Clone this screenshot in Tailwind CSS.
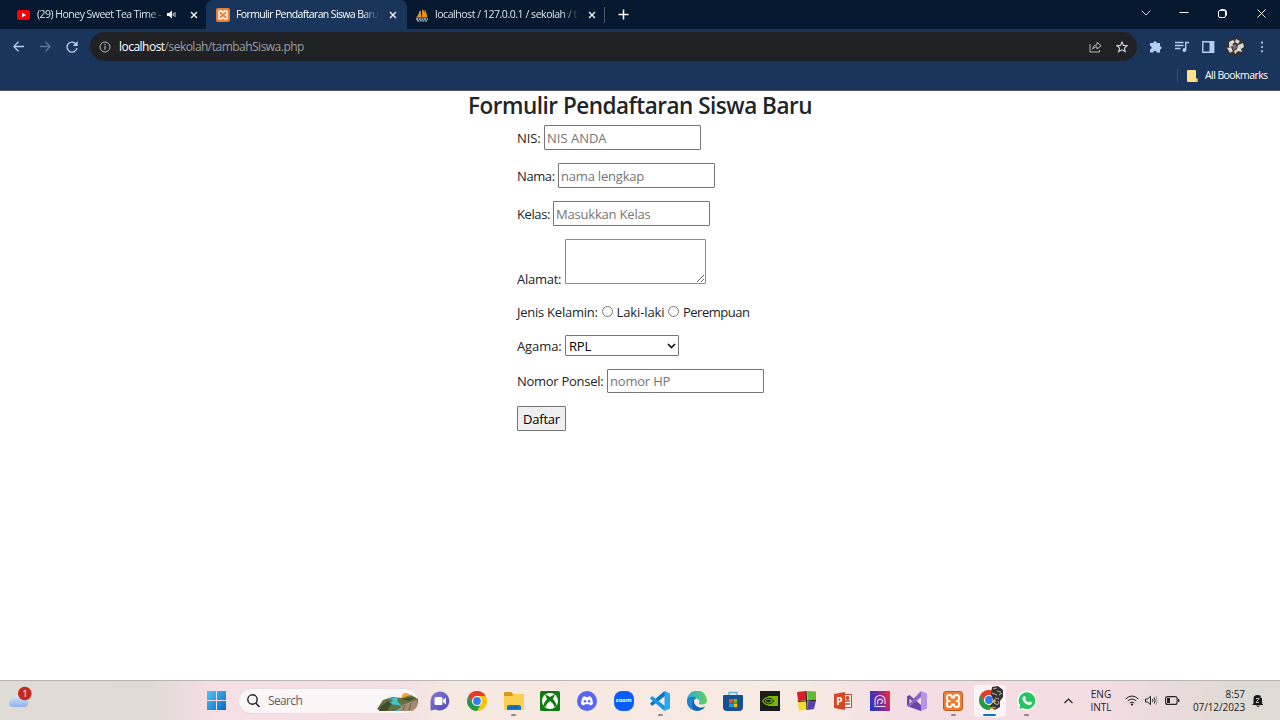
<!DOCTYPE html>
<html lang="id">
<head>
<meta charset="utf-8">
<title>Formulir Pendaftaran Siswa Baru</title>
<script src="https://cdn.jsdelivr.net/npm/@tailwindcss/browser@4"></script>
</head>
<body class="h-[720px] w-[1280px] overflow-hidden bg-white font-['Open_Sans','Noto_Sans',sans-serif]">
<div class="flex h-[720px] w-[1280px] flex-col overflow-hidden">

<!-- Tab strip -->
<header class="flex h-[29px] shrink-0 bg-[#071831] text-[10.5px] text-white">
  <div class="flex w-[206px] items-center pl-[17px]">
    <svg class="h-[10px] w-[13px] shrink-0" viewBox="0 0 13 10"><rect width="13" height="10" rx="2.5" fill="#f00"/><path d="M5 2.8 9 5 5 7.2z" fill="#fff"/></svg>
    <span class="ml-[7px] w-[130px] whitespace-nowrap text-[10.5px] tracking-[-0.52px] text-[#dce3ee] [mask-image:linear-gradient(90deg,#000_85%,transparent)]">(29) Honey Sweet Tea Time -</span>
    <svg class="h-[9px] w-[10px] shrink-0" viewBox="0 0 10 9"><path d="M0 3h2l3-2.5v8L2 6H0z" fill="#fff"/><path d="M6.3 3v3M8 2v5" stroke="#cdd6e4" fill="none"/></svg>
    <svg class="ml-[13px] h-[8px] w-[8px] shrink-0" viewBox="0 0 8 8"><path d="m1 1 6 6M7 1 1 7" stroke="#fff" stroke-width="1.3"/></svg>
  </div>
  <div class="flex w-[201px] items-center rounded-t-[7px] bg-[#1a355b] pl-[10px]">
    <svg class="h-[14px] w-[14px] shrink-0" viewBox="0 0 20 20"><rect width="20" height="20" rx="3" fill="#ef7c35"/><path d="M4 6q0-2 2.500-2Q9 4 9 6.500h2Q11 4 13.500 4 16 4 16 6v2q0 1.500-1.500 2 1.500.5 1.500 2v2q0 2-2.500 2-2.500 0-2.500-2.500H9Q9 16 6.500 16 4 16 4 14v-2q0-1.500 1.500-2Q4 9.500 4 8z" fill="none" stroke="#fff" stroke-width="2.100"/></svg>
    <span class="ml-[6px] w-[143px] whitespace-nowrap tracking-[-0.62px] [mask-image:linear-gradient(90deg,#000_88%,transparent)]">Formulir Pendaftaran Siswa Baru</span>
    <svg class="ml-[10px] h-[8px] w-[8px] shrink-0" viewBox="0 0 8 8"><path d="m1 1 6 6M7 1 1 7" stroke="#fff" stroke-width="1.3"/></svg>
  </div>
  <div class="flex w-[197px] items-center pl-[8px]">
    <svg class="h-[14px] w-[14px] shrink-0" viewBox="0 0 14 14"><path d="M1 9.5Q4 7 4.5 2L6 9.5zM6.500 9.500Q7.500 5 7 1q4 3 5 8.500z" fill="#f29111"/><path d="M5.500 9.500V3M12 9l-2-7" stroke="#ffc46a" stroke-width=".7"/><path d="M1 11h12M2 12.800h10" stroke="#c0bfd0" stroke-width="1.300" stroke-dasharray="2 .7"/></svg>
    <span class="ml-[6px] w-[144px] whitespace-nowrap tracking-[-0.45px] text-[#dce3ee] [mask-image:linear-gradient(90deg,#000_88%,transparent)]">localhost / 127.0.0.1 / sekolah / t</span>
    <svg class="ml-[9px] h-[8px] w-[8px] shrink-0" viewBox="0 0 8 8"><path d="m1 1 6 6M7 1 1 7" stroke="#fff" stroke-width="1.3"/></svg>
  </div>
  <div class="flex items-center">
    <span class="h-[16px] w-px bg-[#4b5769]"></span>
    <svg class="ml-[13px] h-[11px] w-[11px]" viewBox="0 0 11 11"><path d="M5.500.5v10M.5 5.500h10" stroke="#fff" stroke-width="1.500"/></svg>
  </div>
  <div class="ml-auto flex h-[26px] items-center pr-[14px]">
    <svg class="h-[6px] w-[10px]" viewBox="0 0 10 6"><path d="m.7.7 4.300 4.300L9.300.7" fill="none" stroke="#d5dbe5"/></svg>
    <svg class="ml-[28px] h-[10px] w-[10px]" viewBox="0 0 10 10"><path d="M.5 4.500h9" stroke="#fff"/></svg>
    <svg class="ml-[29px] h-[9px] w-[9px]" viewBox="0 0 9 9"><rect x=".5" y="1.500" width="7" height="7" rx="1.500" fill="none" stroke="#fff"/><path d="M2.500.6h3.500q2.500 0 2.500 2.500v3.500" fill="none" stroke="#fff"/></svg>
    <svg class="ml-[30px] h-[9px] w-[9px]" viewBox="0 0 9 9"><path d="m.5.5 8 8M8.500.5l-8 8" stroke="#fff"/></svg>
  </div>
</header>

<!-- Toolbar -->
<div class="flex h-[35px] shrink-0 items-center bg-[#1a355b] pl-[13px]">
  <svg class="h-[11px] w-[11px]" viewBox="0 0 11 11"><path d="M11 5.500H1M5.500.7.8 5.500l4.700 4.800" fill="none" stroke="#b5cdf0" stroke-width="1.300"/></svg>
  <svg class="ml-[16px] h-[11px] w-[11px]" viewBox="0 0 11 11"><path d="M0 5.500h10M5.500.7l4.700 4.800-4.700 4.800" fill="none" stroke="#5674a0" stroke-width="1.300"/></svg>
  <svg class="ml-[15px] h-[12px] w-[12px]" viewBox="0 0 12 12"><path d="M10.500 3.800A5 5 0 1 0 11 7" fill="none" stroke="#b5cdf0" stroke-width="1.400"/><path d="M11.700 0v5H6.700z" fill="#b5cdf0"/></svg>
  <div class="ml-[12px] flex h-[29px] w-[1047px] items-center rounded-full bg-[#202124] pr-[9px] pl-[9px]">
    <svg class="h-[12px] w-[12px]" viewBox="0 0 12 12"><circle cx="6" cy="6" r="5" fill="none" stroke="#b4b7bb"/><path d="M6 5.200v3.600M6 3v1.200" stroke="#b4b7bb" stroke-width="1.200"/></svg>
    <span class="ml-[8px] text-[12px] tracking-[-0.52px] text-[#9a9da1]"><span class="text-white">localhost</span>/sekolah/tambahSiswa.php</span>
    <svg class="ml-auto h-[12px] w-[13px]" viewBox="0 0 13 12"><path d="M1 3v8h9.500V9M3.500 8Q4 4 8 3.700V1.300l4.200 3.500L8 8V5.900Q5.200 5.800 3.500 8z" fill="none" stroke="#b4b7bb"/></svg>
    <svg class="ml-[14px] h-[12px] w-[12px]" viewBox="0 0 12 12"><path d="m6 1 1.500 3.400 3.700.3-2.800 2.400.9 3.600L6 8.800l-3.300 1.900.9-3.600L.8 4.700l3.700-.3z" fill="none" stroke="#d5d7da" stroke-width="1.100"/></svg>
  </div>
  <svg class="ml-[12px] h-[13px] w-[13px]" viewBox="0 0 13 13"><path d="M1 3h3.200a1.800 1.800 0 1 1 3.600 0H11v3.200a1.600 1.600 0 1 1 0 3.200V12.500H7.700a1.700 1.700 0 0 0-3.400 0H1V9.300a1.600 1.600 0 0 0 0-3.300z" fill="#b5cdf0"/></svg>
  <svg class="ml-[13px] h-[12px] w-[14px]" viewBox="0 0 14 12"><path d="M0 1.500h8.500M0 4.500h8.500M0 7.500h5.500M10.700 9V1.500H14" fill="none" stroke="#b5cdf0" stroke-width="1.400"/><circle cx="9.400" cy="9" r="1.900" fill="#b5cdf0"/></svg>
  <svg class="ml-[13px] h-[12px] w-[13px]" viewBox="0 0 13 12"><path d="M.8.8h10.900v10.400H.8z" fill="none" stroke="#b5cdf0" stroke-width="1.400"/><path d="M7.500 1h4v10h-4z" fill="#b5cdf0"/></svg>
  <svg class="ml-[11px] h-[19px] w-[19px]" viewBox="0 0 19 19"><circle cx="9.500" cy="9.500" r="9.500" fill="#312f30"/><path d="m3 5 4-2 2 2-3 2 2 2-5 1zM10 2l4 2-2 3-3-2zM1 11l4-1 2 4-3 2zM12 8l5-2 1 4-3 2 1 3-4-1-3 3-1-3 3-2z" fill="#d8d5cf"/><path d="m7 8 3-1 1 4-4 2z" fill="#77706a"/><path d="m5 4 2 3M12 12l3 2M3 12l3 1" stroke="#eee"/></svg>
  <svg class="ml-[15px] h-[12px] w-[4px]" viewBox="0 0 4 12"><g fill="#b5cdf0"><circle cx="2" cy="1.700" r="1.100"/><circle cx="2" cy="6" r="1.100"/><circle cx="2" cy="10.300" r="1.100"/></g></svg>
</div>

<!-- Bookmarks bar -->
<div class="flex h-[27px] shrink-0 items-center justify-end border-b border-[#4a5470] bg-[#1a355b] pr-[12px] pb-[3px]">
  <span class="h-[13px] w-px bg-[#35527b]"></span>
  <svg class="ml-[9px] h-[12px] w-[11px]" viewBox="0 0 11 12"><path d="M0 1q0-1 1-1h7q1 0 1 1v7l1.500 1v3H1q-1 0-1-1z" fill="#ffe08a"/><path d="M8.500 8.500h2V12h-2z" fill="#f5c84c"/></svg>
  <span class="ml-[7px] w-[63px] text-[10.5px] tracking-[-0.57px] whitespace-nowrap text-white">All Bookmarks</span>
</div>

<!-- Page -->
<main class="flex h-[589px] shrink-0 flex-col bg-white text-[13px] leading-[20px] tracking-[-0.2px] text-[#212529]">
  <h1 class="h-[34px] text-center text-[22.5px] leading-[29px] font-semibold tracking-[-0.49px] whitespace-nowrap">Formulir Pendaftaran Siswa Baru</h1>
  <form class="ml-[517px] flex flex-col items-start gap-[13px]">
    <div class="flex h-[25px] items-center"><label class="w-[27px] tracking-[-0.1px] whitespace-nowrap">NIS:</label><input class="h-[25px] w-[157px] rounded-[1px] border border-[#767676] px-[2px] tracking-[0px] placeholder:text-[#757575]" placeholder="NIS ANDA"></div>
    <div class="flex h-[25px] items-center"><label class="w-[41px] tracking-[-0.4px] whitespace-nowrap">Nama:</label><input class="h-[25px] w-[157px] rounded-[1px] border border-[#767676] px-[2px] placeholder:text-[#757575]" placeholder="nama lengkap"></div>
    <div class="flex h-[25px] items-center"><label class="w-[36px] tracking-[-0.4px] whitespace-nowrap">Kelas:</label><input class="h-[25px] w-[157px] rounded-[1px] border border-[#767676] px-[2px] placeholder:text-[#757575]" placeholder="Masukkan Kelas"></div>
    <div class="flex h-[45px] items-end"><label class="-mb-[5px] w-[48px] tracking-[-0.25px] whitespace-nowrap">Alamat:</label><textarea class="h-[45px] w-[141px] resize rounded-[1px] border border-[#8a8a8a]"></textarea></div>
    <div class="mt-[5px] flex h-[20px] items-center whitespace-nowrap">
      <span class="w-[85px] tracking-[-0.25px]">Jenis Kelamin:</span>
      <input type="radio" class="-mt-[2px] h-[11px] w-[11px] appearance-none rounded-full border border-[#767676]"><label class="w-[55px] pl-[3.500px] tracking-[-0.1px]">Laki-laki</label>
      <input type="radio" class="-mt-[2px] h-[11px] w-[11px] appearance-none rounded-full border border-[#767676]"><label class="pl-[4px] tracking-[-0.5px]">Perempuan</label>
    </div>
    <div class="flex h-[21px] items-center"><label class="w-[48px] tracking-[-0.1px] whitespace-nowrap">Agama:</label>
      <div class="grid h-[21px] w-[114px] items-center">
        <select class="col-start-1 row-start-1 h-[21px] w-[114px] appearance-none rounded-[1px] border border-[#767676] pl-[3px] leading-[20px] text-black"><option>RPL</option></select>
        <svg class="col-start-1 row-start-1 mr-[3px] h-[6px] w-[9px] justify-self-end" viewBox="0 0 9 6"><path d="m1 1 3.500 3.500L8 1" fill="none" stroke="#111" stroke-width="1.700"/></svg>
      </div></div>
    <div class="flex h-[24px] items-center"><label class="w-[90px] tracking-[-0.28px] whitespace-nowrap">Nomor Ponsel:</label><input class="h-[24px] w-[157px] rounded-[1px] border border-[#767676] px-[2px] placeholder:text-[#757575]" placeholder="nomor HP"></div>
    <button type="button" class="h-[25px] w-[49px] rounded-[1px] border border-[#767676] bg-[#efefef] text-black">Daftar</button>
  </form>
</main>

<!-- Taskbar -->
<footer class="flex h-[40px] shrink-0 items-center border-t border-[#b9b5b4] bg-[linear-gradient(90deg,#dfdbd5_0px,#dfdad5_150px,#f7dfe5_215px,#f4e0e4_400px,#f5e9e0_450px,#f8e8e2_600px,#f6ebe3_800px,#f5dde3_900px,#f4dce3_1100px,#e0dad4_1230px,#dfdad4_1280px)] text-[#222]">
  <svg class="ml-[8px] h-[25px] w-[26px] shrink-0 -translate-y-[3px]" viewBox="0 0 26 25"><defs><linearGradient id="cl" x2="0" y2="1"><stop stop-color="#d8e8ff"/><stop offset="1" stop-color="#8fb2ec"/></linearGradient></defs><path d="M5 22a4 4 0 0 1 0-8 6 6 0 0 1 11-1 4.600 4.600 0 0 1 1 9z" fill="url(#cl)"/><circle cx="16.800" cy="8.500" r="6.800" fill="#c42b1c"/><text x="14.500" y="12" fill="#fff" font-size="9">1</text></svg>
  <svg class="ml-[173px] h-[19px] w-[19px] shrink-0" viewBox="0 0 19 19"><defs><linearGradient id="wn" x2="1" y2="1"><stop stop-color="#4cc9f5"/><stop offset="1" stop-color="#0668cc"/></linearGradient></defs><path d="M0 0h9v9H0zM10 0h9v9h-9zM0 10h9v9H0zM10 10h9v9h-9z" fill="url(#wn)"/></svg>
  <div class="ml-[12px] flex h-[26px] w-[181px] shrink-0 items-center overflow-hidden rounded-full border border-[#e7dcde] bg-[#fbf5f7] pl-[8px]">
    <svg class="h-[14px] w-[13px]" viewBox="0 0 13 14"><circle cx="5.500" cy="5.500" r="4.700" fill="none" stroke="#222" stroke-width="1.400"/><path d="m9 9.300 3.400 3.700" stroke="#222" stroke-width="1.600"/></svg>
    <span class="ml-[8px] text-[12px] tracking-[-0.7px] text-[#5f5c5e]"><span class="tracking-[-0.65px]">Search</span></span>
    <svg class="mt-[3px] ml-auto h-[20px] w-[41px]" viewBox="0 0 41 20"><circle cx="29" cy="5.500" r="4.500" fill="#f6a531"/><path d="M0 17 6 8l9-3 10 1 9-3 7 4v8l-6 4H3z" fill="#65723f"/><path d="m20 19 7-7 13-4v7l-5 4z" fill="#a58b70"/><path d="M11 6q8 2 3 4t6 3-2 6h4q5-4 1-7t-2-6z" fill="#3fc4d0"/><path d="m3 15 8-6 4 3-5 7H2zM24 7l8 2 7-4" fill="#3f4f2c"/><path d="m26 18 2-5M32 18l2-7" stroke="#705a48"/></svg>
  </div>

  <div class="ml-[3px] flex h-[39px] shrink-0 items-center">
    <div class="flex h-full w-[36.65px] items-center justify-center"><svg class="h-[20px] w-[20px]" viewBox="0 0 20 20"><defs><linearGradient id="ch" x2="1" y2="1"><stop stop-color="#8a78d8"/><stop offset="1" stop-color="#4a49b8"/></linearGradient></defs><path d="M10 .5a9.500 9.500 0 1 1-4.500 18L.5 19.500V10A9.500 9.500 0 0 1 10 .5z" fill="url(#ch)"/><rect x="4.500" y="6" width="8" height="8" rx="1.500" fill="#fff"/><path d="m13 9 3-2.500v7L13 11z" fill="#fff"/></svg></div>
    <div class="flex h-full w-[36.65px] items-center justify-center"><svg class="h-[20px] w-[20px]" viewBox="0 0 20 20"><circle cx="10" cy="10" r="10" fill="#fbc116"/><path d="M1.340 5A10 10 0 0 1 18.660 5H10L5.670 12.500z" fill="#e33b2e"/><path d="M1.340 5 5.670 12.500 10 15h4.300L10 20A10 10 0 0 1 1.340 5z" fill="#229a49"/><path d="M14.330 12.500 10 20A10 10 0 0 0 18.660 5H10z" fill="#fbc116"/><circle cx="10" cy="10" r="5" fill="#fff"/><circle cx="10" cy="10" r="3.900" fill="#2f7de9"/></svg></div>
    <div class="relative flex h-full w-[36.65px] items-center justify-center"><svg class="h-[20px] w-[20px]" viewBox="0 0 20 20"><path d="M0 2q0-1 1-1h6l2 2h10q1 0 1 1v5H0z" fill="#d9971b"/><path d="M0 5h8l2-2h9q1 0 1 1v14q0 1-1 1H1q-1 0-1-1z" fill="#fbd050"/><path d="M3 19v-3q0-2 2-2h10q2 0 2 2v3z" fill="#1778c2"/><path d="M6 16.500h8" stroke="#0b4f8c"/></svg><span class="absolute bottom-[4px] h-[2px] w-[5px] rounded-full bg-[#8b8584]"></span></div>
    <div class="flex h-full w-[36.65px] items-center justify-center"><svg class="h-[20px] w-[20px]" viewBox="0 0 20 20"><rect width="20" height="20" rx="1.500" fill="#107c10"/><circle cx="10" cy="10" r="8" fill="#fff"/><path d="M5 3.500Q7 3.500 10 6q3-2.500 5-2.500L13 8q3.500 4 3.500 7L14.500 16Q13 12 10 10q-3 2-4.500 6L3.500 15Q3.500 12 7 8z" fill="#107c10"/></svg></div>
    <div class="flex h-full w-[36.65px] items-center justify-center"><svg class="h-[20px] w-[20px]" viewBox="0 0 20 20"><circle cx="10" cy="10" r="10" fill="#5865f2"/><path d="M6 5.800 8.300 5.200 8.800 6h2.400l.5-.8L14 5.800q2.200 3.500 2 7.200-1.500 1.200-3 1.500l-.8-1.200H7.800L7 14.500Q5.500 14.200 4 13q-.2-3.700 2-7.200z" fill="#fff"/><circle cx="7.900" cy="10.200" r="1.300" fill="#5865f2"/><circle cx="12.100" cy="10.200" r="1.300" fill="#5865f2"/></svg></div>
    <div class="flex h-full w-[36.65px] items-center justify-center"><div class="flex h-[20px] w-[20px] items-center justify-center rounded-[8px] bg-[#0b5cff] text-[6px] font-bold tracking-[-0.1px] text-white">zoom</div></div>
    <div class="relative flex h-full w-[36.65px] items-center justify-center"><svg class="h-[20px] w-[20px]" viewBox="0 0 20 20"><path d="M14.500 0 20 2.500v15L14.500 20z" fill="#29a8ee"/><path d="M14.500 0 0 12.500 2 15 15 5z" fill="#0878be"/><path d="M14.500 20 0 7.500 2 5l13 10z" fill="#1595dc"/></svg><span class="absolute bottom-[4px] h-[2px] w-[5px] rounded-full bg-[#8b8584]"></span></div>
    <div class="flex h-full w-[36.65px] items-center justify-center"><svg class="h-[20px] w-[20px]" viewBox="0 0 20 20"><defs><linearGradient id="ed" x2="1"><stop stop-color="#27a9e1"/><stop offset="1" stop-color="#61d35b"/></linearGradient></defs><path d="M0 10a10 10 0 0 1 20-1c.3 4-3.500 5-7 4.500-2-.3-.4-1.500-.5-3C12 7 4 5 0 10z" fill="url(#ed)"/><path d="M0 10c1-4.500 7-5 9.500-2.500C6 8 6 13 10 15.500c3 2 6 1 8.500-.3A10 10 0 0 1 0 10z" fill="#1263b5"/><path d="M0 10q3-4.500 8-2.500Q3 11 6.500 19A10 10 0 0 1 0 10z" fill="#1c87d4"/></svg></div>
    <div class="flex h-full w-[36.65px] items-center justify-center"><svg class="h-[20px] w-[20px]" viewBox="0 0 20 20"><path d="M6 5V1.500h8V5" fill="none" stroke="#4db8ef" stroke-width="1.400"/><path d="M0 5q0-1 1-1h18q1 0 1 1v11q0 4-4 4H4q-4 0-4-4z" fill="#174f91"/><path d="M6 8h3.700v3.700H6z" fill="#f25022"/><path d="M10.500 8h3.700v3.700h-3.700z" fill="#7fba00"/><path d="M6 12.500h3.700v3.700H6z" fill="#00a4ef"/><path d="M10.500 12.500h3.700v3.700h-3.700z" fill="#ffb900"/></svg></div>
    <div class="flex h-full w-[36.65px] items-center justify-center"><svg class="h-[20px] w-[20px]" viewBox="0 0 20 20"><path d="M0 0h20v20H0z" fill="#1b1b1b"/><path d="M8 5h10v10H8z" fill="#76b900"/><path d="M2.500 10Q7 4 12 7.500q2 1.300 3 2.500-3 4-7 3.800Q4.500 13.500 2.500 10z" fill="none" stroke="#76b900" stroke-width="1.100"/><path d="M5 10q3-3.500 7 0-3 3.500-7 0z" fill="#1b1b1b" stroke="#76b900"/><path d="M8 7q3.500 0 6 3-2.500 3-6 3" fill="none" stroke="#1b1b1b"/></svg></div>
    <div class="flex h-full w-[36.65px] items-center justify-center"><svg class="h-[20px] w-[20px]" viewBox="0 0 20 20"><path d="m0 1 9-1 1 9-9 1z" fill="#d91f26"/><path d="m10 0 9 .5V9l-8.500.5z" fill="#62bb30"/><path d="m1 11 8-1 1 8-8 2z" fill="#f0de2a"/><path d="m10.500 10.500 8.500-1-2 8.500-6.500 1z" fill="#5941a8"/><path d="m9 0 1 19M1 10.500 19 9.300" stroke="#222"/></svg></div>
    <div class="flex h-full w-[36.65px] items-center justify-center"><svg class="h-[20px] w-[20px]" viewBox="0 0 20 20"><path d="M10 3.500h8.500v13H10z" fill="#fff" stroke="#cf4323"/><path d="M12 10h5M12 13h5" stroke="#cf4323" stroke-width="1.400"/><circle cx="14.500" cy="7" r="2" fill="#cf4323"/><path d="m1 3 11-2v18L1 17z" fill="#d24726"/><text x="3.300" y="13.700" font-size="10" font-weight="bold" fill="#fff">P</text></svg></div>
    <div class="flex h-full w-[36.65px] items-center justify-center"><svg class="h-[20px] w-[20px]" viewBox="0 0 20 20"><defs><linearGradient id="rd" x1="0" y1=".6" x2="1" y2=".3"><stop stop-color="#2838c0"/><stop offset=".5" stop-color="#772a9c"/><stop offset="1" stop-color="#f02844"/></linearGradient></defs><path d="M0 0h20v20H0z" fill="url(#rd)"/><path d="M5 14.500V9.500a5 5 0 0 1 10 0v3.500M7.600 13.500V10a2.600 2.600 0 0 1 5 0q0 2.300-2.300 2.500M4.500 15.500h11" fill="none" stroke="#ece3fa" stroke-width="1.100"/></svg></div>
    <div class="flex h-full w-[36.65px] items-center justify-center"><svg class="h-[20px] w-[20px]" viewBox="0 0 20 20"><path d="M0 5.500 2.500 4 14 14v6L2.500 16 0 14.500z" fill="#6a45a5"/><path d="M14 0v6L2.500 16 0 14.500z" fill="#8c64c5"/><path d="M14 0 20 2.500v15L14 20z" fill="#b692e8"/><path d="M2.500 7.500v5L5 10z" fill="#f5dde3"/></svg></div>
    <div class="relative flex h-full w-[36.65px] items-center justify-center"><svg class="h-[20px] w-[20px]" viewBox="0 0 20 20"><rect x=".5" y=".5" width="19" height="19" rx="2.500" fill="#ef7d32" stroke="#bd5a19"/><path d="M4 6q0-2 2.500-2Q9 4 9 6.500h2Q11 4 13.500 4 16 4 16 6v2q0 1.500-1.500 2 1.500.5 1.500 2v2q0 2-2.500 2-2.500 0-2.500-2.500H9Q9 16 6.500 16 4 16 4 14v-2q0-1.500 1.500-2Q4 9.500 4 8z" fill="none" stroke="#fff" stroke-width="1.900"/></svg><span class="absolute bottom-[4px] h-[2px] w-[5px] rounded-full bg-[#8b8584]"></span></div>
    <div class="relative flex h-full w-[36.65px] items-center justify-center"><div class="flex h-[32px] w-[32px] items-center justify-center rounded-[3px] bg-[#fcf3f6]"><svg class="mt-[-3px] ml-[2px] h-[26px] w-[26px] shrink-0" viewBox="0 0 26 26"><g transform="translate(1 4)"><circle cx="10" cy="10" r="10" fill="#fbc116"/><path d="M1.340 5A10 10 0 0 1 18.660 5H10L5.670 12.500z" fill="#e33b2e"/><path d="M1.340 5 5.670 12.500 10 15h4.300L10 20A10 10 0 0 1 1.340 5z" fill="#229a49"/><circle cx="10" cy="10" r="5" fill="#fff"/><circle cx="10" cy="10" r="3.900" fill="#2f7de9"/></g><path d="m14 1 6-1 5 4v7l-3 4v6l-5 3-5-4 4-5-3-6z" fill="#343232"/><path d="m15 3 4-1M19 5l4 1M14 7l5 2M21 9l3-2M17 12l4 1M16 17l4 2M14 21l4 1M20 15l1 3" stroke="#aaa7a3" stroke-width="1.100"/><path d="m14 15 3-2 1 3-3 1z" fill="#efb528"/></svg></div><span class="absolute bottom-[4px] h-[2px] w-[13px] rounded-full bg-[#0870d2]"></span></div>
    <div class="relative flex h-full w-[36.65px] items-center justify-center"><svg class="h-[20px] w-[20px]" viewBox="0 0 20 20"><path d="M10 0a9.700 9.700 0 1 1-4.700 18.300L.3 19.700 1.700 15A9.700 9.700 0 0 1 10 0z" fill="#fff"/><path d="M10 1.300a8.400 8.400 0 1 1-4.400 15.600l-3.400 1 1-3.400A8.400 8.400 0 0 1 10 1.300z" fill="#25c562"/><path d="M6.800 5.200q1.200-.5 1.500.6l.5 1.300q.2.500-.6 1.400 1.300 2.200 3.400 3 .8-1.300 1.500-1l1.700.9q.5.300 0 1.400-1 1.600-3 1.200-5-1.400-6.400-5.800-.3-2 1.400-3z" fill="#fff"/></svg><span class="absolute bottom-[4px] h-[2px] w-[5px] rounded-full bg-[#8b8584]"></span></div>
  </div>

  <div class="ml-auto flex items-center pr-[16px] text-[10px] leading-[13px]">
    <svg class="h-[6px] w-[9px]" viewBox="0 0 9 6"><path d="m.5 5 4-4 4 4" fill="none" stroke="#222" stroke-width="1.200"/></svg>
    <div class="ml-[17px] w-[22px] text-center whitespace-nowrap">ENG<br>INTL</div>
    <svg class="ml-[13px] h-[11px] w-[14px]" viewBox="0 0 14 11"><path d="M.7 4Q7-2 13.300 4M2.700 6Q7 2 11.300 6M4.700 8Q7 6 9.300 8" fill="none" stroke="#222"/><circle cx="7" cy="9.500" r="1.100" fill="#222"/></svg>
    <svg class="ml-[6px] h-[11px] w-[13px]" viewBox="0 0 13 11"><path d="M.5 4h2L5.500 1.300v8.400L2.500 7h-2zM7.500 4q1 1.500 0 3M9.200 2.500q2 3 0 6" fill="none" stroke="#222"/><path d="M11 1q2.500 4.500 0 9" fill="none" stroke="#999"/></svg>
    <svg class="ml-[7px] h-[9px] w-[15px]" viewBox="0 0 15 9"><rect x=".6" y=".6" width="11.500" height="7.800" rx="2" fill="none" stroke="#222" stroke-width="1.100"/><path d="M2 2h3v5H2zM13 3h1.300v3H13z" fill="#222"/></svg>
    <div class="ml-[12px] w-[53px] text-right tracking-[-0.1px] whitespace-nowrap">8:57<br>07/12/2023</div>
    <svg class="ml-[7px] h-[13px] w-[12px]" viewBox="0 0 12 13"><path d="M1.500 9.500V5Q1.500 1 5.500 1 10 1 10 5v4.500l1 .8v.7H.5v-.7zM4 11.500h4Q6 14 4 11.500z" fill="#161616"/><path d="M4 4.500h3l-3 4h3M8.500.5H11L8.500 3.300H11" fill="none" stroke="#efe5e3" stroke-width=".8"/></svg>
  </div>
</footer>
</div>
</body>
</html>
